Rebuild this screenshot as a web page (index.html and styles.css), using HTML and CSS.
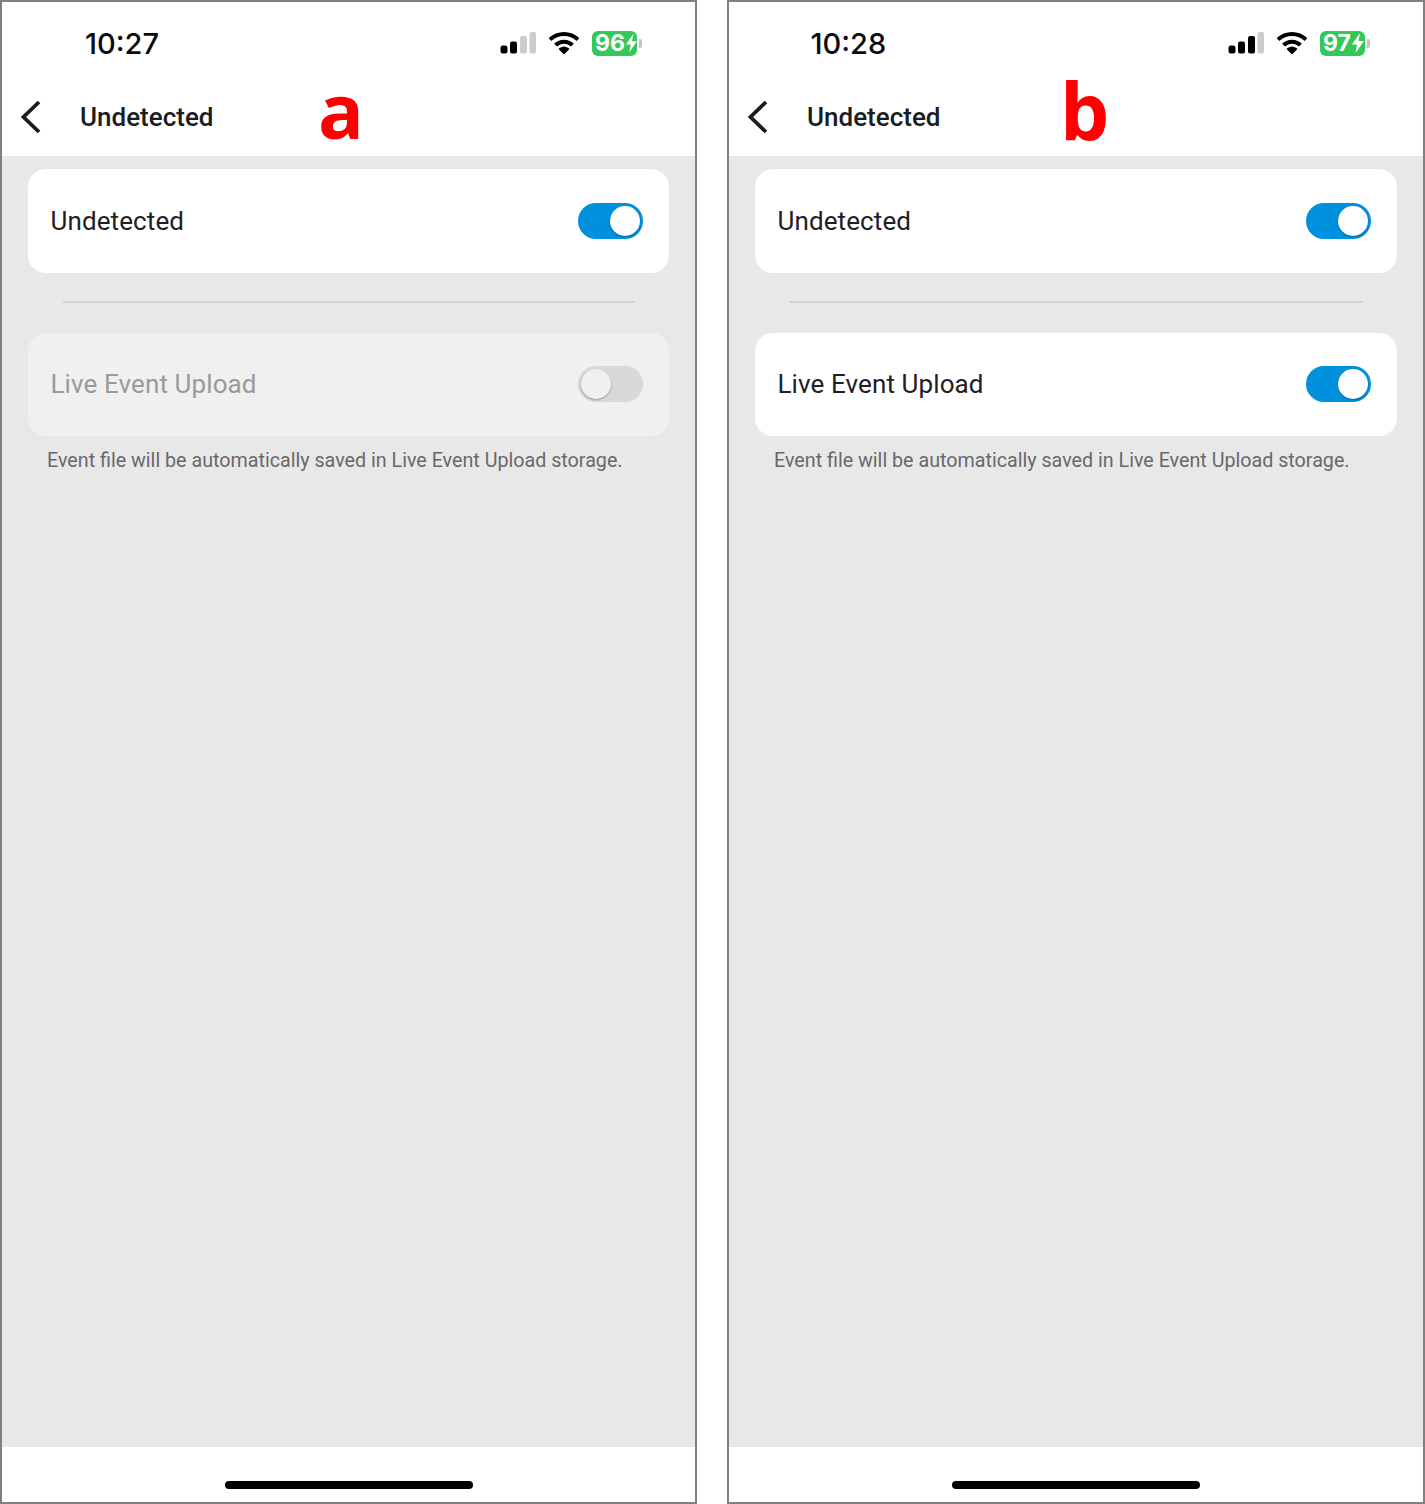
FILE: index.html
```html
<!DOCTYPE html>
<html lang="en">
<head>
    <meta charset="UTF-8">
    <title>Undetected</title>
    <link rel="stylesheet" href="styles.css">
</head>
<body>
    <div class="screens">
        <!-- a: upload off -->
        <div class="phone phone-a">
            <div class="status-bar">
                <span class="time">10:27</span>
                <div class="status-icons">
                    <svg class="signal" width="36" height="24" viewBox="0 0 36 24">
                        <rect x="0.5" y="14.5" width="7" height="8" rx="2.5" fill="#000"/>
                        <rect x="10" y="10.5" width="7" height="12" rx="2" fill="#000"/>
                        <rect x="20" y="5" width="7" height="17.5" rx="2" fill="#ccc"/>
                        <rect x="29.5" y="1" width="6.5" height="21.5" rx="2" fill="#ccc"/>
                    </svg>
                    <svg class="wifi" width="32" height="24" viewBox="0 0 32 24">
                        <path d="M2 8.5C10 1 22 1 30 8.5" fill="none" stroke="#000" stroke-width="4"/>
                        <path d="M7.5 14C12.500 9.500 19.500 9.500 24.500 14" fill="none" stroke="#000" stroke-width="4"/>
                        <path d="M10.500 18C14 14.500 18 14.500 21.500 18L16 23.500Z" fill="#000"/>
                    </svg>
                    <div class="battery"><span class="battery-num">96</span><svg class="bolt" width="12" height="20" viewBox="0 0 12 20"><path d="M8 0L0 11.500H5L3.500 20L12 8H6.500Z" fill="#fff"/></svg></div>
                    <span class="battery-cap"></span>
                </div>
            </div>
            <div class="nav-bar">
                <svg class="back" width="22" height="34" viewBox="0 0 22 34"><path d="M19 2L3.500 17L19 32" fill="none" stroke="#1a1c24" stroke-width="3.800"/></svg>
                <h1 class="nav-title">Undetected</h1>
                <span class="letter letter-a">a</span>
            </div>
            <div class="content">
                <div class="card">
                    <span class="card-label">Undetected</span>
                    <span class="toggle toggle-on"><span class="knob"></span></span>
                </div>
                <div class="divider"></div>
                <div class="card card-disabled">
                    <span class="card-label">Live Event Upload</span>
                    <span class="toggle toggle-off"><span class="knob"></span></span>
                </div>
                <p class="note">Event file will be automatically saved in Live Event Upload storage.</p>
            </div>
            <div class="home-bar"><span class="home-indicator"></span></div>
        </div>

        <!-- b: upload on -->
        <div class="phone phone-b">
            <div class="status-bar">
                <span class="time">10:28</span>
                <div class="status-icons">
                    <svg class="signal" width="36" height="24" viewBox="0 0 36 24">
                        <rect x="0.5" y="14.5" width="7" height="8" rx="2.5" fill="#000"/>
                        <rect x="10" y="10.5" width="7" height="12" rx="2" fill="#000"/>
                        <rect x="20" y="5" width="7" height="17.5" rx="2" fill="#000"/>
                        <rect x="29.5" y="1" width="6.5" height="21.5" rx="2" fill="#ccc"/>
                    </svg>
                    <svg class="wifi" width="32" height="24" viewBox="0 0 32 24">
                        <path d="M2 8.5C10 1 22 1 30 8.5" fill="none" stroke="#000" stroke-width="4"/>
                        <path d="M7.5 14C12.500 9.500 19.500 9.500 24.500 14" fill="none" stroke="#000" stroke-width="4"/>
                        <path d="M10.500 18C14 14.500 18 14.500 21.500 18L16 23.500Z" fill="#000"/>
                    </svg>
                    <div class="battery"><span class="battery-num">97</span><svg class="bolt" width="12" height="20" viewBox="0 0 12 20"><path d="M8 0L0 11.500H5L3.500 20L12 8H6.500Z" fill="#fff"/></svg></div>
                    <span class="battery-cap"></span>
                </div>
            </div>
            <div class="nav-bar">
                <svg class="back" width="22" height="34" viewBox="0 0 22 34"><path d="M19 2L3.500 17L19 32" fill="none" stroke="#1a1c24" stroke-width="3.800"/></svg>
                <h1 class="nav-title">Undetected</h1>
                <span class="letter letter-b">b</span>
            </div>
            <div class="content">
                <div class="card">
                    <span class="card-label">Undetected</span>
                    <span class="toggle toggle-on"><span class="knob"></span></span>
                </div>
                <div class="divider"></div>
                <div class="card">
                    <span class="card-label">Live Event Upload</span>
                    <span class="toggle toggle-on"><span class="knob"></span></span>
                </div>
                <p class="note">Event file will be automatically saved in Live Event Upload storage.</p>
            </div>
            <div class="home-bar"><span class="home-indicator"></span></div>
        </div>
    </div>
</body>
</html>
```

FILE: styles.css
```css
* {
    margin: 0;
    padding: 0;
    box-sizing: border-box;
}

body {
    background: #fff;
    font-family: Roboto, "Liberation Sans", sans-serif;
}

.screens {
    display: flex;
    gap: 30px;
    height: 1504px;
}

.phone {
    display: flex;
    flex-direction: column;
    height: 1504px;
    border: 2px solid #808080;
    background: #e8e8e8;
}

.phone-a {
    width: 697px;
}

.phone-b {
    width: 698px;
}

.status-bar {
    display: flex;
    justify-content: space-between;
    align-items: center;
    height: 80px;
    padding: 2px 53px 0 83px;
    background: #fff;
}

.phone-b .status-bar {
    padding-left: 81.5px;
}

.time {
    font-family: Inter, sans-serif;
    font-size: 29px;
    font-weight: 500;
    color: #0b0b0f;
}

.status-icons {
    display: flex;
    align-items: center;
}

.signal {
    margin-right: 12px;
}

.wifi {
    margin-right: 12px;
}

.battery {
    display: flex;
    align-items: center;
    width: 45px;
    height: 25px;
    padding-left: 3px;
    border-radius: 6px;
    background: #34c759;
}

.battery-num {
    font-family: Inter, sans-serif;
    font-size: 23px;
    font-weight: 700;
    line-height: 25px;
    color: #fff;
}

.bolt {
    margin-left: 1px;
}

.battery-cap {
    width: 3px;
    height: 9px;
    margin-left: 2px;
    border-radius: 0 2px 2px 0;
    background: #c4c4c4;
}

.nav-bar {
    position: relative;
    display: flex;
    align-items: center;
    height: 74px;
    padding: 0 0 4px 18px;
    background: #fff;
}

.back {
    flex-shrink: 0;
}

.nav-title {
    margin-left: 38px;
    font-size: 26px;
    font-weight: 500;
    color: #1a1c24;
}

.letter {
    position: absolute;
    top: -22px;
    font-family: "Open Sans", sans-serif;
    font-weight: 700;
    line-height: 100px;
    color: #ff0000;
}

.letter-a {
    left: 316px;
    font-size: 76px;
}

.letter-b {
    left: 331px;
    font-size: 78px;
}

.content {
    flex: 1;
    padding: 13px 26px 0;
}

.card {
    display: flex;
    justify-content: space-between;
    align-items: center;
    height: 103.5px;
    padding: 0 26px 0 22.5px;
    border-radius: 18px;
    background: #fff;
}

.card-label {
    font-size: 26px;
    letter-spacing: 0.1px;
    color: #1f2026;
}

.card-disabled {
    background: #f0f0f0;
}

.card-disabled .card-label {
    color: #9a9a9c;
}

.toggle {
    display: flex;
    align-items: center;
    width: 65px;
    height: 36px;
    padding: 3px;
    border-radius: 18px;
}

.toggle-on {
    justify-content: flex-end;
    background: #0091de;
}

.toggle-off {
    justify-content: flex-start;
    background: #d8d8d8;
}

.knob {
    width: 30px;
    height: 30px;
    border-radius: 50%;
    background: #fff;
    box-shadow: 0 1px 2px rgba(0, 0, 0, 0.3);
}

.toggle-off .knob {
    background: #f0f0f0;
}

.divider {
    height: 2px;
    margin: 28.5px 34px 29.5px 35px;
    background: #d2d2d2;
}

.note {
    margin-top: 11px;
    padding-left: 19px;
    font-size: 19.7px;
    line-height: 27px;
    color: #68686c;
}

.home-bar {
    display: flex;
    justify-content: center;
    align-items: flex-end;
    height: 55px;
    padding-bottom: 13px;
    background: #fff;
}

.home-indicator {
    width: 248px;
    height: 8px;
    border-radius: 4px;
    background: #000;
}
```
